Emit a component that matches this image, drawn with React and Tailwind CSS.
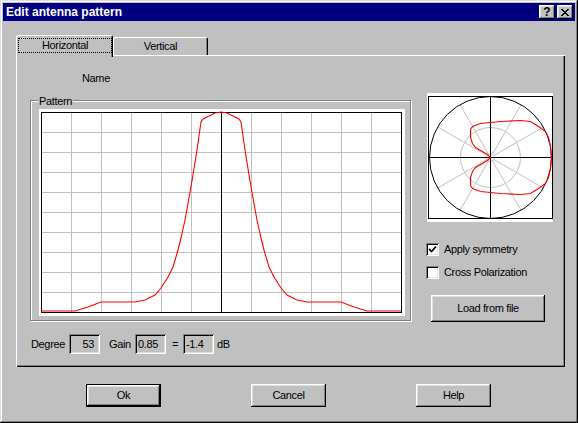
import React from "react";

/* bevels, classic 3d look */
const frame = "shadow-[inset_-1px_-1px_0_#000,inset_1px_1px_0_#dfdfdf,inset_-2px_-2px_0_#808080,inset_2px_2px_0_#fff]";
const raised = "shadow-[inset_-1px_-1px_0_#000,inset_1px_1px_0_#fff,inset_-2px_-2px_0_#808080,inset_2px_2px_0_#dfdfdf]";
const sunken = "shadow-[inset_1px_1px_0_#808080,inset_-1px_-1px_0_#fff,inset_2px_2px_0_#000,inset_-2px_-2px_0_#dfdfdf]";

// right half of the rectangular pattern: [dx from centre, y]
const curve = [
  [0, 3], [6, 4], [12, 7], [18, 10], [20, 13], [24, 41], [28, 66], [32, 89],
  [36, 111], [40, 129], [43, 141], [48, 158], [53, 168], [60, 179], [66, 186],
  [76, 191], [86, 193], [120, 193], [133, 198], [146, 202], [180, 202],
];

// upper half of the polar lobe, relative to the centre
const lobe = [
  [61, 0], [60, -11], [58, -20], [55, -26], [48, -31], [40, -36], [30, -37],
  [10, -36], [0, -35], [-10, -34], [-18, -31], [-20, -28], [-20, -20],
  [-18, -14], [-15, -10], [-3, -3], [0, 0],
];

function CloseGlyph() {
  const rows = ["11000011", "01100110", "00111100", "00011000", "00111100", "01100110", "11000011"];
  return (
    <svg width="8" height="7" viewBox="0 0 8 7" shapeRendering="crispEdges">
      {rows.map((r, y) =>
        r.split("").map((c, x) => (c === "1" ? <rect key={`${x}-${y}`} x={x} y={y} width="1" height="1" fill="#000" /> : null))
      )}
    </svg>
  );
}

function TitleBar() {
  return (
    <div className="flex h-[18px] items-center bg-[#000080] pl-[3px] pr-[2px]">
      <span className="text-[12px] font-bold tracking-normal text-white">Edit antenna pattern</span>
      <div className="ml-auto flex gap-[2px]">
        <div className={`flex h-[14px] w-[16px] items-center justify-center bg-[#c0c0c0] text-[12px] font-bold leading-none tracking-normal ${raised}`}>
          ?
        </div>
        <div className={`flex h-[14px] w-[16px] items-center justify-center bg-[#c0c0c0] ${raised}`}>
          <CloseGlyph />
        </div>
      </div>
    </div>
  );
}

function Tabs() {
  return (
    <div className="flex h-[20px] items-end">
      <div className="relative z-10 -mb-[2px] h-[22px] w-[97px] rounded-t-[2px] bg-[#c0c0c0] pl-[2px] pt-[3px] shadow-[inset_1px_1px_0_#fff,inset_-1px_0_0_#000,inset_-2px_0_0_#808080]">
        <div className="flex h-[15px] w-[94px] items-center justify-center border border-dotted border-black">
          Horizontal
        </div>
      </div>
      <div className="flex h-[18px] w-[95px] items-center justify-center rounded-t-[2px] bg-[#c0c0c0] shadow-[inset_1px_1px_0_#fff,inset_-1px_0_0_#000,inset_-2px_0_0_#808080]">
        Vertical
      </div>
    </div>
  );
}

function PatternChart() {
  const cx = 182;
  const pts = [
    ...curve.slice().reverse().map(([dx, y]) => [cx - dx, y]),
    ...curve.slice(1).map(([dx, y]) => [cx + dx, y]),
  ];
  return (
    <svg width="366" height="207" viewBox="0 0 366 207" className="block">
      {Array.from({ length: 11 }, (_, k) => (
        <line key={`v${k}`} x1={32.5 + 30 * k} y1="3" x2={32.5 + 30 * k} y2="204" stroke="#c0c0c0" />
      ))}
      {Array.from({ length: 9 }, (_, k) => (
        <line key={`h${k}`} x1="2" y1={23.5 + 20 * k} x2="363" y2={23.5 + 20 * k} stroke="#c0c0c0" />
      ))}
      <line x1="182.5" y1="3" x2="182.5" y2="204" stroke="#000" />
      <rect x="2.5" y="3.5" width="360" height="200" fill="none" stroke="#000" />
      <polyline points={pts.map((p) => p.join(",")).join(" ")} fill="none" stroke="#ff0000" strokeWidth="1.1" />
    </svg>
  );
}

function PolarPlot() {
  const c = [63.5, 64.5];
  const upper = lobe.map(([dx, dy]) => [c[0] + dx, c[1] + dy]);
  const lower = lobe.slice(0, -1).reverse().map(([dx, dy]) => [c[0] + dx, c[1] - dy]);
  const d = "M" + [...upper, ...lower].map((p) => p.join(" ")).join(" L") + " Z";
  const spokes = [30, 60, 120, 150, 210, 240, 300, 330];
  return (
    <svg width="126" height="129" viewBox="0 0 126 129" className="block">
      {spokes.map((a) => {
        const r = (a * Math.PI) / 180;
        return (
          <line
            key={a}
            x1={c[0] + 4 * Math.cos(r)}
            y1={c[1] + 4 * Math.sin(r)}
            x2={c[0] + 61 * Math.cos(r)}
            y2={c[1] + 61 * Math.sin(r)}
            stroke="#c0c0c0"
          />
        );
      })}
      <circle cx={c[0]} cy={c[1]} r="30" fill="none" stroke="#c0c0c0" />
      <circle cx={c[0]} cy={c[1]} r="4" fill="none" stroke="#c0c0c0" />
      <circle cx={c[0]} cy={c[1]} r="61" fill="none" stroke="#000" />
      <line x1="1.5" y1={c[1]} x2="125.5" y2={c[1]} stroke="#000" />
      <line x1={c[0]} y1="3.5" x2={c[0]} y2="125.5" stroke="#000" />
      <rect x="1.5" y="3.5" width="124" height="122" fill="none" stroke="#000" />
      <path d={d} fill="none" stroke="#ff0000" strokeWidth="1.1" />
    </svg>
  );
}

function Checkbox({ checked, label }) {
  return (
    <div className="flex items-start gap-[5px]">
      <div className={`flex h-[13px] w-[13px] items-center justify-center bg-white ${sunken}`}>
        {checked && (
          <svg width="9" height="9" viewBox="0 0 9 9">
            <path d="M1 4 L3.5 6.5 L8 1.5" fill="none" stroke="#000" strokeWidth="1.8" />
          </svg>
        )}
      </div>
      <span>{label}</span>
    </div>
  );
}

function ReadBox({ value, right }) {
  return (
    <div className={`flex h-[20px] w-[31px] items-center bg-[#c0c0c0] ${right ? "justify-end pr-[6px]" : "pl-[3px]"} ${sunken}`}>
      {value}
    </div>
  );
}

function Panel() {
  return (
    <div className="flex h-[312px] shadow-[inset_1px_1px_0_#fff,inset_-1px_-1px_0_#000,inset_-2px_-2px_0_#808080]">
      {/* left: name, pattern chart, readout */}
      <div className="flex flex-col pl-[14px]">
        <div className="ml-[52px] mt-[17px] h-[13px]">Name</div>
        <div className="relative mt-[15px] h-[221px] w-[381px] border border-[#808080] pl-[8px] pt-[8px] shadow-[inset_1px_1px_0_#fff,1px_1px_0_#fff]">
          <span className="absolute left-[7px] top-[-6px] bg-[#c0c0c0] px-[1px]">Pattern</span>
          <div className="h-[207px] w-[366px] bg-white">
            <PatternChart />
          </div>
        </div>
        <div className="mt-[13px] flex items-center">
          <span className="w-[39px] pl-[1px]">Degree</span>
          <ReadBox value="53" right />
          <span className="w-[35px] pl-[9px]">Gain</span>
          <ReadBox value="0.85" />
          <span className="w-[17px] pl-[6px]">=</span>
          <ReadBox value="-1.4" />
          <span className="ml-[3px]">dB</span>
        </div>
      </div>

      {/* right: polar view and options */}
      <div className="ml-[15px] flex flex-col">
        <div className="ml-[1px] mt-[38px] h-[129px] w-[126px] bg-white">
          <PolarPlot />
        </div>
        <div className="mt-[21px]">
          <Checkbox checked label="Apply symmetry" />
        </div>
        <div className="mt-[10px]">
          <Checkbox label="Cross Polarization" />
        </div>
        <button
          type="button"
          className={`ml-[5px] mt-[16px] flex h-[27px] w-[114px] items-center justify-center bg-[#c0c0c0] ${raised}`}
        >
          Load from file
        </button>
      </div>
    </div>
  );
}

export default function App() {
  return (
    <div
      className={`flex h-[423px] w-[578px] flex-col bg-[#c0c0c0] p-[3px] font-['Liberation_Sans',Arial,sans-serif] text-[11px] leading-[13px] tracking-[-0.35px] text-black ${frame}`}
    >
      <TitleBar />
      <div className="ml-[13px] mt-[14px] w-[549px]">
        <Tabs />
        <Panel />
      </div>
      <div className="mt-[17px] flex gap-[90px] pl-[83px]">
        <button type="button" className="h-[23px] w-[75px] border border-black bg-[#c0c0c0]">
          <div className={`flex h-full w-full items-center justify-center ${raised}`}>Ok</div>
        </button>
        <button type="button" className={`flex h-[23px] w-[75px] items-center justify-center bg-[#c0c0c0] ${raised}`}>
          Cancel
        </button>
        <button type="button" className={`flex h-[23px] w-[75px] items-center justify-center bg-[#c0c0c0] ${raised}`}>
          Help
        </button>
      </div>
    </div>
  );
}
